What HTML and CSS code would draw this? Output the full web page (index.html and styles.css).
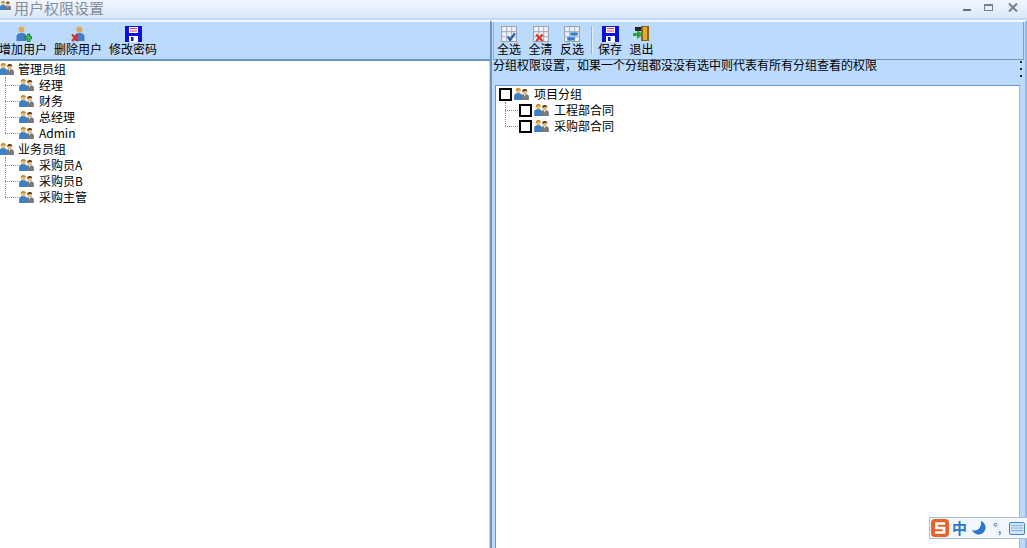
FILE: index.html
```html
<!DOCTYPE html>
<html lang="zh">
<head>
<meta charset="utf-8">
<title>用户权限设置</title>
<link rel="stylesheet" href="styles.css">
</head>
<body>
<svg class="defs" width="0" height="0">
  <symbol id="users" viewBox="0 0 16 13">
    <path d="M7 13V9.500C7 7.500 9 6.500 11.500 6.500S16 7.500 16 9.500V13z" fill="#77797c"/>
    <path d="M10.500 6.500h2l-1 3z" fill="#f2efe6"/>
    <circle cx="11.500" cy="4" r="2.700" fill="#e9b878"/>
    <path d="M8.800 4C8.800 1.800 10 1 11.500 1S14.200 1.800 14.200 3.500L12 3z" fill="#4a3524"/>
    <path d="M0 13V8.500C0 6.500 2 5.500 4.500 5.500S8.500 6.500 8.500 8.500V13z" fill="#3f7fc4"/>
    <circle cx="4.500" cy="3" r="2.700" fill="#eebd6c"/>
    <path d="M1.800 3C1.800 1 3 0 4.500 0S7.200 1 7.200 2.500L5 2z" fill="#bf8726"/>
  </symbol>
  <symbol id="floppy" viewBox="0 0 17 16">
    <path d="M0 0h17v16H0z" fill="#0a12d8"/>
    <path d="M4 1h9v6H4z" fill="#fff"/>
    <path d="M5 2.500h7M5 5h7" stroke="#e0304a"/>
    <path d="M4 10h9v6H4z" fill="#fff"/>
    <path d="M6 11h2.500v4H6z" fill="#0a12d8"/>
  </symbol>
  <symbol id="grid" viewBox="0 0 15 15">
    <path d="M.5.500h14v14H.500z" fill="#eef1f6" stroke="#98a2b2"/>
    <path d="M5.300.500v14M10 .500v14M.500 5.300h14M.500 10h14" stroke="#a8b0bf"/>
  </symbol>
</svg>

<header class="titlebar">
  <svg class="title-icon"><use href="#users"/></svg>
  <span class="title-text">用户权限设置</span>
  <div class="win-buttons">
    <span class="win-min"></span>
    <span class="win-max"></span>
    <svg class="win-close" viewBox="0 0 10 9"><path d="M1 .500l8 8M9 .500l-8 8" stroke="#75808e" stroke-width="2"/></svg>
  </div>
</header>

<main class="panes">
  <section class="pane-left">
    <div class="toolbar toolbar-left">
      <div class="tool tool-add">
        <svg class="tool-icon-user" viewBox="0 0 16 16">
          <path d="M1 15v-4c0-3 2-4 5-4s5 1 5 4v4z" fill="#3f80c8"/>
          <circle cx="6" cy="3.500" r="3" fill="#e2a94e"/>
          <path d="M9.500 10.500h2.500V8h2.500v2.500H16V13h-1.500v2.500H12V13H9.500z" fill="#3ec24e" stroke="#0d6a1e" stroke-width=".7"/>
        </svg>
        <span>增加用户</span>
      </div>
      <div class="tool tool-del">
        <svg class="tool-icon-user" viewBox="0 0 16 16">
          <path d="M4 15v-4c0-3 2-4 5-4s5 1 5 4v4z" fill="#3f80c8"/>
          <circle cx="9" cy="3.500" r="3" fill="#e2a94e"/>
          <path d="M1.500 8.500l6 6.500M7.500 8.500l-6 6.500" stroke="#d8322c" stroke-width="2.200"/>
        </svg>
        <span>删除用户</span>
      </div>
      <div class="tool tool-pwd">
        <svg class="tool-icon-floppy"><use href="#floppy"/></svg>
        <span>修改密码</span>
      </div>
    </div>
    <div class="tree tree-left">
      <div class="node node-root"><svg class="u"><use href="#users"/></svg><span>管理员组</span></div>
      <div class="branch">
        <div class="node"><svg class="u"><use href="#users"/></svg><span>经理</span></div>
        <div class="node"><svg class="u"><use href="#users"/></svg><span>财务</span></div>
        <div class="node"><svg class="u"><use href="#users"/></svg><span>总经理</span></div>
        <div class="node"><svg class="u"><use href="#users"/></svg><span>Admin</span></div>
      </div>
      <div class="node node-root"><svg class="u"><use href="#users"/></svg><span>业务员组</span></div>
      <div class="branch">
        <div class="node"><svg class="u"><use href="#users"/></svg><span>采购员A</span></div>
        <div class="node"><svg class="u"><use href="#users"/></svg><span>采购员B</span></div>
        <div class="node"><svg class="u"><use href="#users"/></svg><span>采购主管</span></div>
      </div>
    </div>
  </section>

  <section class="pane-right">
    <div class="toolbar toolbar-right">
      <div class="tool tool-sm">
        <svg class="tool-icon-grid" viewBox="0 0 15 15"><use href="#grid"/><path d="M6.500 10l2 3L13 7" fill="none" stroke="#2255b0" stroke-width="2"/></svg>
        <span>全选</span>
      </div>
      <div class="tool tool-sm">
        <svg class="tool-icon-grid" viewBox="0 0 15 15"><use href="#grid"/><path d="M3 8l6 6M9 8l-6 6" stroke="#d8322c" stroke-width="2"/></svg>
        <span>全清</span>
      </div>
      <div class="tool tool-sm">
        <svg class="tool-icon-grid" viewBox="0 0 15 15"><use href="#grid"/><path d="M6 6h7v3H6zM3 10.500h7v3H3z" fill="#2a7fd0"/></svg>
        <span>反选</span>
      </div>
      <div class="tool-sep"></div>
      <div class="tool tool-sm">
        <svg class="tool-icon-floppy"><use href="#floppy"/></svg>
        <span>保存</span>
      </div>
      <div class="tool tool-sm">
        <svg class="tool-icon-exit" viewBox="0 0 17 16">
          <path d="M8 0h8v15H8z" fill="#8d6212"/>
          <path d="M10 1h4v13h-4z" fill="#e0aa3a"/>
          <path d="M2 1h6v4H2z" fill="#222"/>
          <path d="M0 7h4V4l6 4.500L4 13v-3H0z" fill="#2da23c"/>
        </svg>
        <span>退出</span>
      </div>
    </div>
    <div class="hint">
      <span>分组权限设置，如果一个分组都没没有选中则代表有所有分组查看的权限</span>
      <div class="grip"><i></i><i></i><i></i></div>
    </div>
    <div class="tree tree-right">
      <div class="node"><b class="check"></b><svg class="u"><use href="#users"/></svg><span>项目分组</span></div>
      <div class="branch">
        <div class="node"><b class="check"></b><svg class="u"><use href="#users"/></svg><span>工程部合同</span></div>
        <div class="node"><b class="check"></b><svg class="u"><use href="#users"/></svg><span>采购部合同</span></div>
      </div>
    </div>
  </section>
</main>

<div class="ime">
  <svg class="ime-logo" viewBox="0 0 18 18">
    <rect x="0" y="0" width="18" height="18" rx="4" fill="#e8622a"/>
    <path d="M14 4.500H5.500v4.500h7.500v4.500H4" fill="none" stroke="#fff" stroke-width="2.600"/>
  </svg>
  <span class="ime-zh">中</span>
  <svg class="ime-moon" viewBox="0 0 14 14"><path d="M9 0a7 7 0 1 1-9 9c5 2 10-2 9-9z" fill="#2a78c8"/></svg>
  <span class="ime-punct">°,</span>
  <svg class="ime-kb" viewBox="0 0 16 13"><rect x=".5" y=".5" width="15" height="12" rx="1.500" fill="#d3e4f8" stroke="#3f84cc"/><path d="M2.500 3.500h11M2.500 6h11M2.500 8.500h11" stroke="#3f84cc" stroke-dasharray="1 1"/></svg>
</div>
</body>
</html>
```
FILE: styles.css
```css
* { box-sizing: border-box; }
html, body { margin: 0; height: 100%; overflow: hidden; }
body {
  width: 1027px;
  height: 548px;
  position: relative;
  display: flex;
  flex-direction: column;
  background: #bcdafc;
  font: 12px/16px "Noto Sans CJK SC", "Liberation Sans", sans-serif;
  color: #000;
}
.defs { position: absolute; }

.titlebar {
  height: 18px;
  flex: none;
  display: flex;
  align-items: flex-start;
  background: linear-gradient(#f1f6fe, #dbe7f8);
}
.title-icon { width: 11px; height: 11px; flex: none; }
.title-text { margin-left: 3px; font-size: 15px; line-height: 15px; color: #858e9a; }
.win-buttons { margin-left: auto; display: flex; align-items: center; height: 14px; }
.win-min { width: 8px; height: 2px; margin: 6px 13px 0 0; background: #66717f; }
.win-max { width: 9px; height: 7px; margin-right: 15px; border: 1px solid #75808e; border-top-width: 2px; background: #e8f0fb; }
.win-close { width: 10px; height: 9px; margin-right: 9px; }

.panes { flex: 1; min-height: 0; display: flex; padding-top: 2px; background: #c4d9f3; }
.pane-left {
  width: 490px;
  flex: none;
  display: flex;
  flex-direction: column;
  border-top: 2px solid #f4f9ff;
  background: #bcdafc;
}
.pane-right {
  flex: 1;
  min-width: 0;
  display: flex;
  flex-direction: column;
  border-left: 2px solid #6e94c4;
  border-right: 2px solid #9ab8dc;
  border-top: 2px solid #f4f9ff;
  padding: 0 1px;
  background: #bcdafc;
}

.toolbar { display: flex; flex: none; }
.toolbar-left {
  height: 39px;
  border-bottom: 2px solid #6b96c8;
  padding-top: 4px;
}
.toolbar-right {
  height: 38px;
  border-left: 1px solid #93b3d8;
  border-right: 1px solid #7f9fc4;
  border-bottom: 1px solid #6b96c8;
  padding: 3px 0 0 3px;
}
.tool { display: flex; flex-direction: column; align-items: center; white-space: nowrap; line-height: 14px; }
.tool-add { width: 46px; }
.tool-del { width: 48px; margin-left: 8px; }
.tool-pwd { width: 48px; margin-left: 7px; }
.tool-sm { width: 24px; margin-right: 7.5px; padding-top: 1px; }
.tool-icon-user { width: 17px; height: 16px; }
.tool-icon-floppy { width: 17px; height: 16px; }
.tool-icon-grid { width: 16px; height: 16px; }
.tool-icon-exit { width: 17px; height: 16px; }
.tool-sep { width: 2px; height: 28px; margin: 1px 5.500px 0 -1px; background: #93b3d8; border-right: 1px solid #e2eefc; }

.tree { background: #fff; }
.tree-left { flex: 1; margin-right: 1px; }
.tree-right {
  flex: 1;
  margin: 0 4px 0 2px;
  border-top: 1px solid #6b96c8;
  border-left: 1px solid #6b96c8;
  border-right: 1px solid #9db8d8;
  padding: 0 0 0 3px;
}
.node { display: flex; align-items: center; height: 16px; white-space: nowrap; position: relative; }
.u { width: 15px; height: 12px; flex: none; margin-right: 5px; }
.tree-left > .node { margin-left: -1px; }
.tree-left > .node .u { margin-right: 4px; }
.tree-left .branch { margin-left: 5px; }
.branch { position: relative; }
.branch::before {
  content: "";
  position: absolute;
  left: 0;
  top: 0;
  bottom: 8px;
  border-left: 1px dotted #8a8a8a;
}
.branch .node { padding-left: 14px; }
.branch .node::before {
  content: "";
  position: absolute;
  left: 0;
  width: 13px;
  top: 8px;
  border-top: 1px dotted #8a8a8a;
}

.hint { height: 25px; flex: none; display: flex; justify-content: space-between; white-space: nowrap; line-height: 10px; }
.grip { width: 3px; display: flex; flex-direction: column; gap: 5px; padding-top: 1px; margin-right: 1px; }
.grip i { display: block; width: 2px; height: 2px; background: #1c2a3c; }

.check {
  width: 13px;
  height: 13px;
  flex: none;
  margin-right: 2px;
  border: 2px solid #000;
  background: #fff;
}
.tree-right .branch { margin-left: 6px; }

.ime {
  position: absolute;
  left: 929px;
  top: 517px;
  width: 98px;
  height: 22px;
  display: flex;
  align-items: center;
  background: #f3f7fc;
  border: 1px solid #a9bdd6;
  border-right: 0;
  color: #2a78c8;
}
.ime-logo { width: 18px; height: 18px; margin-left: 1px; flex: none; }
.ime-zh { margin-left: 3px; font-size: 15px; font-weight: 700; }
.ime-moon { width: 14px; height: 14px; margin-left: 5px; flex: none; }
.ime-punct { margin-left: 7px; font-size: 13px; width: 16px; }
.ime-kb { width: 16px; height: 13px; flex: none; }
```
